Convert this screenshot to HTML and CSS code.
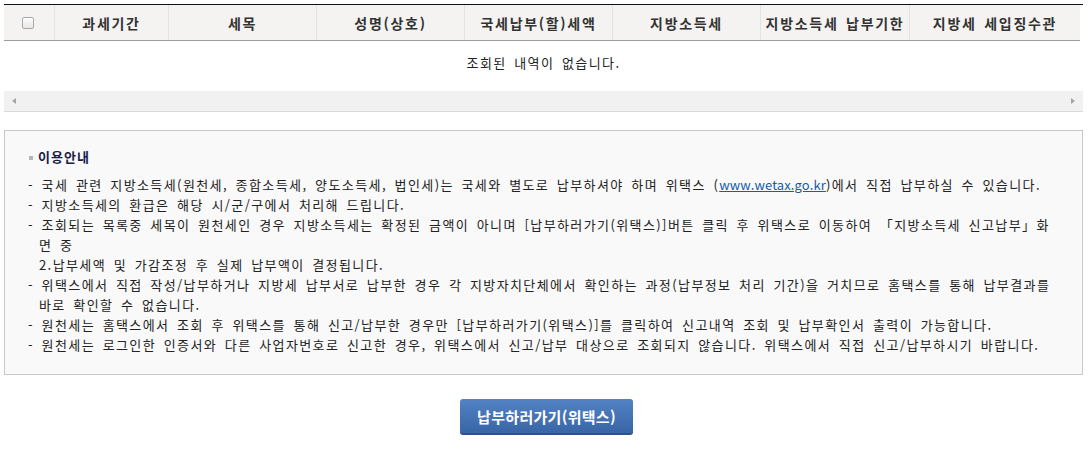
FILE: index.html
```html
<!DOCTYPE html>
<html lang="ko">
<head>
    <meta charset="UTF-8">
    <title>지방소득세 납부</title>
    <link rel="stylesheet" href="styles.css">
</head>
<body>
<div class="grid-wrap">
    <div class="grid-head">
        <div class="th"><span class="chk"></span></div>
        <div class="th">과세기간</div>
        <div class="th">세목</div>
        <div class="th">성명(상호)</div>
        <div class="th">국세납부(할)세액</div>
        <div class="th">지방소득세</div>
        <div class="th">지방소득세 납부기한</div>
        <div class="th">지방세 세입징수관</div>
    </div>
    <div class="grid-empty">조회된 내역이 없습니다.</div>
    <div class="hscroll">
        <span class="arr arr-left"></span>
        <span class="arr arr-right"></span>
    </div>
</div>

<div class="guide">
    <h3 class="guide-title">이용안내</h3>
    <ul class="guide-list">
        <li>- 국세 관련 지방소득세(원천세, 종합소득세, 양도소득세, 법인세)는 국세와 별도로 납부하셔야 하며 위택스 (<a href="#">www.wetax.go.kr</a>)에서 직접 납부하실 수 있습니다.</li>
        <li>- 지방소득세의 환급은 해당 시/군/구에서 처리해 드립니다.</li>
        <li>- 조회되는 목록중 세목이 원천세인 경우 지방소득세는 확정된 금액이 아니며 [납부하러가기(위택스)]버튼 클릭 후 위택스로 이동하여 「지방소득세 신고납부」화<br>면 중<br>2.납부세액 및 가감조정 후 실제 납부액이 결정됩니다.</li>
        <li>- 위택스에서 직접 작성/납부하거나 지방세 납부서로 납부한 경우 각 지방자치단체에서 확인하는 과정(납부정보 처리 기간)을 거치므로 홈택스를 통해 납부결과를<br>바로 확인할 수 없습니다.</li>
        <li>- 원천세는 홈택스에서 조회 후 위택스를 통해 신고/납부한 경우만 [납부하러가기(위택스)]를 클릭하여 신고내역 조회 및 납부확인서 출력이 가능합니다.</li>
        <li>- 원천세는 로그인한 인증서와 다른 사업자번호로 신고한 경우, 위택스에서 신고/납부 대상으로 조회되지 않습니다. 위택스에서 직접 신고/납부하시기 바랍니다.</li>
    </ul>
</div>

<div class="btn-area">
    <button type="button" class="btn-blue">납부하러가기(위택스)</button>
</div>
</body>
</html>
```

FILE: styles.css
```css
*{
    padding: 0;
    margin: 0;
    box-sizing: border-box;
}

html, body{
    background: #fff;
}

body{
    padding: 4px 7px 0 4px;
    font-family: "Noto Sans CJK KR", "Noto Sans", sans-serif;
    font-size: 13px;
    letter-spacing: 1.4px;
    word-spacing: 2.6px;
    color: #222;
}

/* 조회 그리드 */
.grid-wrap{
    width: 1079px;
    border-top: 1px solid #111;
}

.grid-head{
    display: grid;
    grid-template-columns: 50px 114px 148px 148px 148px 148px 149px 171px;
    width: 1076px;
    background: #f4f3f1;
    border-bottom: 1px solid #9c9c9c;
}

.grid-head .th{
    height: 35px;
    display: flex;
    align-items: center;
    justify-content: center;
    font-size: 14px;
    font-weight: bold;
    letter-spacing: 1.7px;
    word-spacing: 2px;
    color: #333;
    border-left: 1px solid #e3e3e3;
}

.grid-head .th:first-child{
    border-left: 0;
}

.chk{
    display: block;
    width: 12px;
    height: 12px;
    margin-left: -2px;
    border: 1px solid #a9a9a9;
    border-radius: 2px;
    background: linear-gradient(#fdfdfd, #e6e6e6);
}

.grid-empty{
    height: 50px;
    line-height: 44px;
    text-align: center;
}

.hscroll{
    position: relative;
    height: 21px;
    background: #f1f1f1;
    border-bottom: 1px solid #dadada;
}

.arr{
    position: absolute;
    top: 7px;
    width: 0;
    height: 0;
    border-top: 3.5px solid transparent;
    border-bottom: 3.5px solid transparent;
}

.arr-left{
    left: 8px;
    border-right: 4px solid #a4a4a4;
}

.arr-right{
    right: 8px;
    border-left: 4px solid #a4a4a4;
}

/* 이용안내 */
.guide{
    width: 1079px;
    margin-top: 18px;
    padding: 16px 0 19px 23px;
    border: 1px solid #c8c8c8;
    background: #f9f9f9;
}

.guide-title{
    font-size: 13px;
    line-height: 20px;
    font-weight: bold;
    letter-spacing: 1px;
    color: #1c1c44;
    padding-left: 10px;
    position: relative;
    margin-bottom: 8px;
}

.guide-title:before{
    content: "";
    position: absolute;
    left: 1px;
    top: 9px;
    width: 4px;
    height: 4px;
    background: #b5b5b5;
}

.guide-list{
    list-style: none;
}

.guide-list li{
    line-height: 20px;
    white-space: nowrap;
    padding-left: 11px;
    text-indent: -11px;
    color: #222;
}

.guide-list a{
    color: #1d5a9f;
    letter-spacing: 0.1px;
    text-decoration: underline;
}

/* 버튼 */
.btn-area{
    margin-top: 24px;
    text-align: center;
}

.btn-blue{
    width: 173px;
    height: 36px;
    margin-left: 6px;
    border: 0;
    border-bottom: 2px solid #2d5188;
    border-radius: 3px;
    background: linear-gradient(#5283c4, #3965a6);
    color: #fff;
    font-family: "Noto Sans CJK KR", "Noto Sans", sans-serif;
    font-size: 15px;
    font-weight: bold;
    letter-spacing: 0.3px;
    word-spacing: 0;
}
```
